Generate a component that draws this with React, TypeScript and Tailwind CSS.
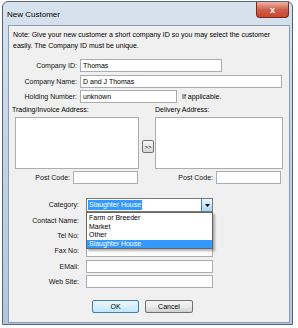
import type { ReactNode } from "react";

const font = "font-['Liberation_Sans',Arial,sans-serif]";

function Box({ w, children, className = "" }: { w: string; children?: ReactNode; className?: string }) {
  return (
    <div className={`${w} h-full border border-[#abadb3] bg-white pl-[2px] text-[7px] leading-[11px] text-black ${className}`}>
      {children}
    </div>
  );
}

function Label({ w, children }: { w: string; children: ReactNode }) {
  return <div className={`${w} shrink-0 text-right text-[7px] leading-[13px] text-[#111]`}>{children}</div>;
}

function FieldRow({ label, mt }: { label: string; mt: string }) {
  return (
    <div className={`flex h-[13px] ${mt}`}>
      <Label w="w-[70px]">{label}</Label>
      <div className="ml-[7px]">
        <Box w="w-[127px]" />
      </div>
    </div>
  );
}

export default function App() {
  const items = ["Farm or Breeder", "Market", "Other", "Slaughter House"];
  return (
    <div className={`h-[328px] w-[298px] bg-white pl-[2px] pt-[1px] ${font}`}>
      <div className="flex h-[324px] w-[291px] flex-col rounded-t-[6px] border border-[#52627a] bg-gradient-to-b from-[#d7e2ee] via-[#c3d3e4] to-[#b3c6db]">
        {/* title bar */}
        <div className="flex h-[23px] items-start justify-between">
          <div className="pl-[4px] pt-[7px] text-[8px] leading-[12px] text-black">New Customer</div>
          <div className="mr-[3px] flex h-[16px] w-[33px] items-center justify-center rounded-b-[4px] border border-t-0 border-[#7a2a20] bg-gradient-to-b from-[#eab3a7] via-[#d0604c] to-[#c9452f] text-[9px] font-bold leading-[10px] text-white">
            x
          </div>
        </div>

        {/* client area */}
        <div className="mb-[1px] ml-[5px] mr-[2px] flex-1 border border-[#8a9cb2] bg-[#f0f0f0] text-black">
          <div className="mt-[3px] pl-[4px] text-[7px] leading-[11px]">
            Note: Give your new customer a short company ID so you may select the customer
            <br />
            easily. The Company ID must be unique.
          </div>

          <div className="mt-[8px] flex h-[13px]">
            <Label w="w-[68px]">Company ID:</Label>
            <div className="ml-[3px]">
              <Box w="w-[142px]">Thomas</Box>
            </div>
          </div>
          <div className="mt-[3px] flex h-[13px]">
            <Label w="w-[68px]">Company Name:</Label>
            <div className="ml-[3px]">
              <Box w="w-[202px]">D and J Thomas</Box>
            </div>
          </div>
          <div className="mt-[2px] flex h-[13px] items-center">
            <Label w="w-[68px]">Holding Number:</Label>
            <div className="ml-[3px] h-full">
              <Box w="w-[97px]">unknown</Box>
            </div>
            <div className="ml-[5px] text-[7px] leading-[13px]">If applicable.</div>
          </div>

          <div className="mt-[1px] flex h-[11px] pl-[3px] text-[7px] leading-[11px]">
            <div className="w-[143px]">Trading/Invoice Address:</div>
            <div>Delivery Address:</div>
          </div>

          <div className="mt-[2px] flex h-[52px] items-start pl-[6px]">
            <Box w="w-[124px]" />
            <div className="ml-[3px] mt-[23px] flex h-[13px] w-[12px] items-center justify-center rounded-[2px] border border-[#707070] bg-gradient-to-b from-[#f6f6f6] to-[#d8d8d8] text-[6px] leading-[8px]">
              &gt;&gt;
            </div>
            <div className="ml-[1px] h-full">
              <Box w="w-[128px]" />
            </div>
          </div>

          <div className="mt-[2px] flex h-[13px]">
            <Label w="w-[61px]">Post Code:</Label>
            <div className="ml-[3px]">
              <Box w="w-[65px]" />
            </div>
            <Label w="w-[75px]">Post Code:</Label>
            <div className="ml-[3px]">
              <Box w="w-[65px]" />
            </div>
          </div>

          {/* category with open list */}
          <div className="mt-[14px] flex h-[14px]">
            <Label w="w-[70px]">Category:</Label>
            <div className="relative ml-[7px] flex h-[14px] w-[127px] border border-[#7a7a7a] bg-white">
              <div className="flex flex-1 items-center pl-[1px]">
                <span className="bg-[#3399ff] px-[1px] text-[7px] leading-[10px] text-white">Slaughter House</span>
              </div>
              <div className="flex w-[11px] items-center justify-center border-l border-[#3c7fb1] bg-gradient-to-b from-[#eaf6fd] to-[#a7d9f5]">
                <svg width="5" height="3" viewBox="0 0 5 3">
                  <path d="M0 0h5L2.5 3z" fill="#000" />
                </svg>
              </div>
              <div className="absolute left-[-1px] top-[13px] z-10 w-[127px] border border-[#646464] bg-white pt-[1px] shadow-[2px_2px_2px_rgba(0,0,0,0.3)]">
                {items.map((it) => (
                  <div
                    key={it}
                    className={`h-[8.5px] pl-[2px] text-[7px] leading-[8.5px] ${
                      it === "Slaughter House" ? "bg-[#3399ff] text-white" : "text-black"
                    }`}
                  >
                    {it}
                  </div>
                ))}
              </div>
            </div>
          </div>
          <FieldRow label="Contact Name:" mt="mt-[2px]" />
          <FieldRow label="Tel No:" mt="mt-[2px]" />
          <FieldRow label="Fax No:" mt="mt-[2px]" />
          <FieldRow label="EMail:" mt="mt-[3px]" />
          <FieldRow label="Web Site:" mt="mt-[2px]" />

          <div className="mt-[12px] flex h-[13px] pl-[83px] text-[7px]">
            <div className="flex w-[47px] items-center justify-center rounded-[2px] border border-[#3c7fb1] bg-gradient-to-b from-[#eaf6fd] via-[#d9f0fc] to-[#bee6fd] leading-[11px]">
              OK
            </div>
            <div className="ml-[6px] flex w-[48px] items-center justify-center rounded-[2px] border border-[#707070] bg-gradient-to-b from-[#f2f2f2] via-[#ebebeb] to-[#cfcfcf] leading-[11px]">
              Cancel
            </div>
          </div>
        </div>
      </div>
    </div>
  );
}
